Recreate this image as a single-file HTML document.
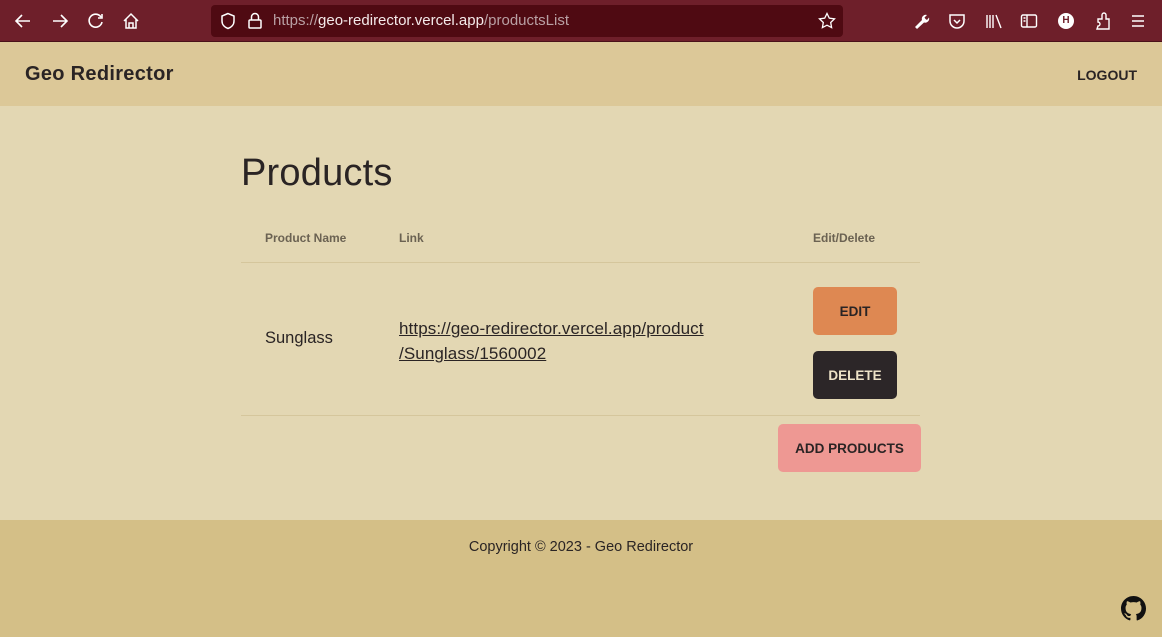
<!DOCTYPE html>
<html><head><style>
*{margin:0;padding:0;box-sizing:border-box}
body{width:1162px;height:637px;overflow:hidden;font-family:"Liberation Sans","DejaVu Sans",sans-serif;background:#e3d7b3;color:#2a2424;position:relative}
.bar{position:absolute;top:0;left:0;width:1162px;height:42px;background:#6e1f2a;border-bottom:1px solid #4a1119}
.url{position:absolute;left:211px;top:5px;width:632px;height:32px;background:#4f0a12;border-radius:4px}
.url span{position:absolute;left:62px;top:7px;font-size:15px;color:#b9a0a4}
.url b{font-weight:normal;color:#f4eaea}
svg.i{position:absolute}
.hdr{position:absolute;top:42px;left:0;width:1162px;height:64px;background:#dcc898}
.hdr .t{position:absolute;left:25px;top:21px;font-size:20px;font-weight:bold;letter-spacing:0.3px}
.hdr .l{position:absolute;right:25px;top:25px;font-size:14px;font-weight:bold}
h1{position:absolute;left:241px;top:152px;font-size:38px;font-weight:normal;letter-spacing:0.2px}
.th{position:absolute;top:231px;font-size:12px;font-weight:bold;color:#6b6252}
.line{position:absolute;left:241px;width:679px;height:1px;background:#d5c69c}
.btn{position:absolute;border-radius:5px;font-size:13.5px;font-weight:bold;text-align:center}
footer{position:absolute;top:520px;left:0;width:1162px;height:117px;background:#d4bf87}
</style></head><body>
<div class="bar">
<svg class="i" style="left:14px;top:12px" width="18" height="18" viewBox="0 0 18 18" fill="none" stroke="#fff" stroke-width="1.6"><path d="M16 9H3M8 3L2 9l6 6"/></svg>
<svg class="i" style="left:51px;top:12px" width="18" height="18" viewBox="0 0 18 18" fill="none" stroke="#fff" stroke-width="1.6"><path d="M2 9h13M10 3l6 6-6 6"/></svg>
<svg class="i" style="left:87px;top:12px" width="18" height="18" viewBox="0 0 18 18" fill="none" stroke="#fff" stroke-width="1.6"><path d="M14 5A6.5 6.5 0 1 0 15 10"/><path d="M15 2v4h-4"/></svg>
<svg class="i" style="left:122px;top:12px" width="18" height="18" viewBox="0 0 18 18" fill="none" stroke="#fff" stroke-width="1.5"><path d="M2 9L9 2l7 7M4 7v9h10V7M7 16v-5h4v5"/></svg>
<div class="url">
<svg class="i" style="left:8px;top:7px" width="18" height="18" viewBox="0 0 18 18" fill="none" stroke="#fff" stroke-width="1.5"><path d="M9 1.5L3 4v5c0 4 3 6.5 6 7.5 3-1 6-3.5 6-7.5V4z"/></svg>
<svg class="i" style="left:36px;top:7px" width="16" height="18" viewBox="0 0 16 18" fill="none" stroke="#fff" stroke-width="1.5"><rect x="2" y="8" width="12" height="8" rx="1"/><path d="M4.5 8V5a3.5 3.5 0 0 1 7 0v3"/></svg>
<span>https://<b>geo-redirector.vercel.app</b>/productsList</span>
<svg class="i" style="left:607px;top:7px" width="18" height="18" viewBox="0 0 18 18" fill="none" stroke="#fff" stroke-width="1.3"><path d="M9 1.5l2.3 4.7 5.2.7-3.8 3.6.9 5.1L9 13.2l-4.6 2.4.9-5.1L1.5 6.9l5.2-.7z"/></svg>
</div>
<svg class="i" style="left:913px;top:12px" width="18" height="18" viewBox="0 0 18 18" fill="#fff"><path d="M2 15l7-7a4 4 0 0 1 5-5l-2.5 2.5 1 1.5 1.5 1L16 5.5a4 4 0 0 1-5 5L4 17z"/></svg>
<svg class="i" style="left:948px;top:12px" width="18" height="18" viewBox="0 0 18 18" fill="none" stroke="#fff" stroke-width="1.5"><path d="M2 3h14v6a7 7 0 0 1-14 0z"/><path d="M6 8l3 3 3-3"/></svg>
<svg class="i" style="left:985px;top:12px" width="18" height="18" viewBox="0 0 18 18" fill="none" stroke="#fff" stroke-width="1.4"><path d="M2 3v13M5 3v13M8 3v13M11 3l5 13"/></svg>
<svg class="i" style="left:1020px;top:12px" width="18" height="18" viewBox="0 0 18 18" fill="none" stroke="#fff" stroke-width="1.4"><rect x="1.5" y="3" width="15" height="12" rx="1.5"/><path d="M7 3v12M3.5 6h2M3.5 9h2"/></svg>
<div style="position:absolute;left:1058px;top:13px;width:16px;height:16px;border-radius:50%;background:#fff;color:#6e1f2a;font-size:10px;font-weight:bold;text-align:center;line-height:16px">H</div>
<svg class="i" style="left:1094px;top:11px" width="18" height="20" viewBox="0 0 18 20" fill="none" stroke="#fff" stroke-width="1.4"><path d="M3 18h12V8h-3V4a2 2 0 0 0-4 0v4H4v3a2 2 0 0 1 0 4z"/></svg>
<svg class="i" style="left:1129px;top:12px" width="18" height="18" viewBox="0 0 18 18" fill="none" stroke="#fff" stroke-width="1.5"><path d="M3 4h12M3 9h12M3 14h12"/></svg>
</div>
<div class="hdr"><div class="t">Geo Redirector</div><div class="l">LOGOUT</div></div>
<h1>Products</h1>
<div class="th" style="left:265px">Product Name</div>
<div class="th" style="left:399px">Link</div>
<div class="th" style="left:813px">Edit/Delete</div>
<div class="line" style="top:262px"></div>
<div style="position:absolute;left:265px;top:329px;font-size:16.5px">Sunglass</div>
<div style="position:absolute;left:399px;top:316px;font-size:17px;line-height:25px;text-decoration:underline;letter-spacing:0.1px">https://geo-redirector.vercel.app/product<br>/Sunglass/1560002</div>
<div class="btn" style="left:813px;top:287px;width:84px;height:48px;line-height:50px;background:#de8852;color:#2a2424">EDIT</div>
<div class="btn" style="left:813px;top:351px;width:84px;height:48px;line-height:50px;background:#2c2628;color:#eee3c8">DELETE</div>
<div class="line" style="top:415px"></div>
<div class="btn" style="left:778px;top:424px;width:143px;height:48px;line-height:50px;background:#ee9893;color:#2a2424">ADD PRODUCTS</div>
<footer>
<div style="position:absolute;top:19px;width:100%;text-align:center;font-size:14.5px">Copyright © 2023 - Geo Redirector</div>
<svg class="i" style="left:1121px;top:76px" width="25" height="25" viewBox="0 0 16 16" fill="#111"><path d="M8 0C3.58 0 0 3.58 0 8c0 3.54 2.29 6.53 5.47 7.59.4.07.55-.17.55-.38v-1.33c-2.23.48-2.7-1.07-2.7-1.07-.36-.92-.89-1.17-.89-1.17-.73-.5.05-.49.05-.49.8.06 1.23.83 1.23.83.71 1.22 1.87.87 2.33.66.07-.52.28-.87.51-1.07-1.78-.2-3.64-.89-3.64-3.95 0-.87.31-1.59.82-2.15-.08-.2-.36-1.02.08-2.12 0 0 .67-.21 2.2.82a7.6 7.6 0 0 1 4 0c1.53-1.04 2.2-.82 2.2-.82.44 1.1.16 1.92.08 2.12.51.56.82 1.27.82 2.15 0 3.07-1.87 3.75-3.65 3.95.29.25.54.73.54 1.48v2.2c0 .21.15.46.55.38A8 8 0 0 0 16 8c0-4.42-3.58-8-8-8z"/></svg>
</footer>
</body></html>
